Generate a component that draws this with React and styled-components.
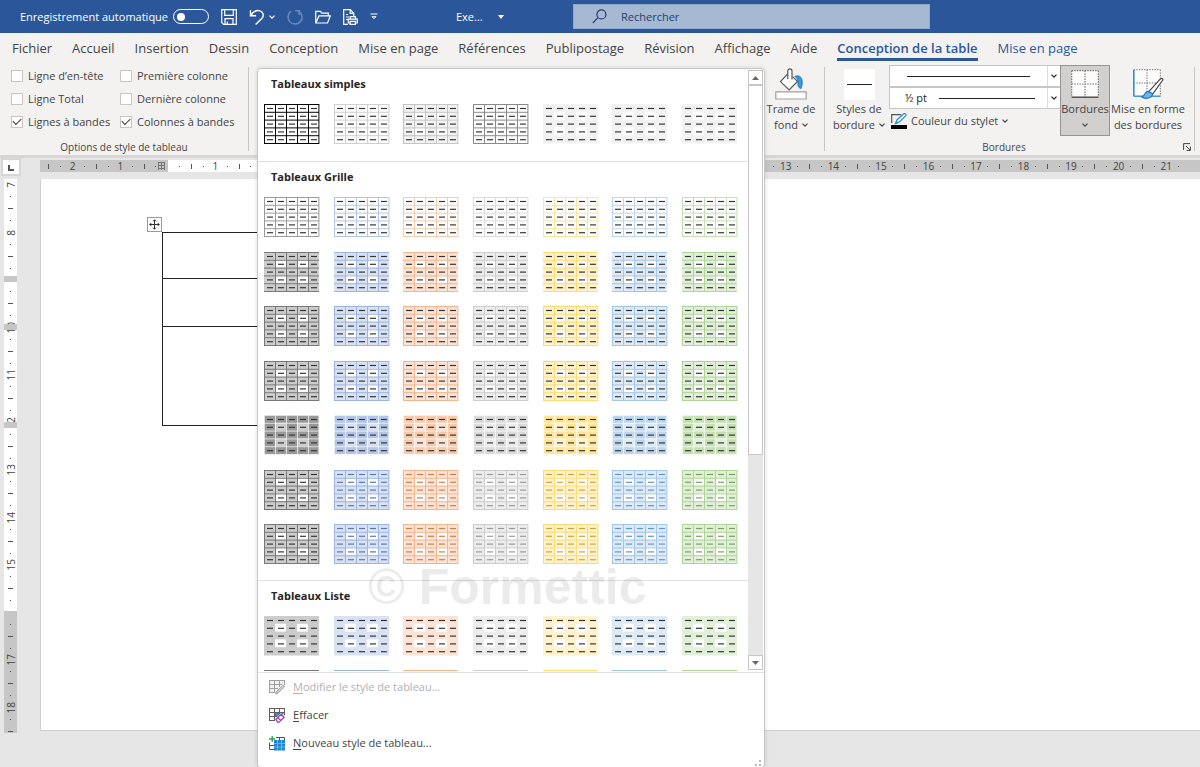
import React from "react";
import styled, { createGlobalStyle } from "styled-components";

const GlobalStyle = createGlobalStyle`
  * { box-sizing: border-box; }
  body {
    margin: 0;
    background: #e6e6e6;
    color: #444;
    font: 11px/16px "Open Sans", "Noto Sans", sans-serif;
  }
  button, input, select {
    font: inherit;
    color: inherit;
    margin: 0;
    padding: 0;
    border: 0;
    background: none;
  }
  svg { display: block; flex: none; }
`;

const Shell = styled.div`
  min-height: 100vh;
  overflow: hidden;
`;

/* ---------- title bar ---------- */

const TitleBar = styled.header`
  display: flex;
  align-items: center;
  height: 33px;
  padding-left: 20px;
  background: #2b579a;
  color: #fff;
`;

const AutoSave = styled.label`
  display: flex;
  align-items: center;
  justify-content: space-between;
  width: 189px;
  margin-right: 12px;
`;

const Toggle = styled.input`
  appearance: none;
  display: flex;
  align-items: center;
  width: 36px;
  height: 15px;
  padding-left: 3px;
  border: 1px solid #fff;
  border-radius: 8px;
  &::before {
    content: "";
    width: 8px;
    height: 8px;
    border-radius: 4px;
    background: #fff;
  }
`;

const QuickTools = styled.div`
  display: flex;
  align-items: center;
  gap: 12px;
  width: 235px;
`;

const ToolPair = styled.div`
  display: flex;
  align-items: center;
  gap: 4px;
`;

const IconButton = styled.button`
  display: flex;
  opacity: ${(p) => (p.disabled ? 0.3 : 1)};
`;

const DocName = styled.button`
  display: flex;
  align-items: center;
  justify-content: space-between;
  width: 48px;
  margin-right: 69px;
`;

const SearchBox = styled.label`
  display: flex;
  align-items: center;
  gap: 14px;
  width: 357px;
  height: 25px;
  padding-left: 18px;
  border: 1px solid #8ea9cf;
  background: #a5b9d3;
  color: #1e3f75;
`;

const SearchInput = styled.input`
  flex: 1;
  min-width: 0;
  outline: 0;
  &::placeholder { color: #1e3f75; opacity: 1; }
`;

/* ---------- ribbon ---------- */

const Tabs = styled.nav`
  display: flex;
  gap: 20px;
  height: 32px;
  padding-left: 12px;
  background: #f3f2f1;
  font-size: 13px;
  white-space: nowrap;
`;

const Tab = styled.button`
  height: 28px;
  padding-top: 4px;
  border-bottom: 3px solid ${(p) => (p.$active ? "#2b579a" : "transparent")};
  color: ${(p) => (p.$context || p.$active ? "#2b579a" : "#444")};
  font-weight: ${(p) => (p.$active ? 600 : 400)};
`;

const Ribbon = styled.div`
  position: relative;
  display: flex;
  height: 90px;
  background: #f3f2f1;
`;

const Group = styled.section`
  display: flex;
  flex-direction: column;
  justify-content: space-between;
  width: ${(p) => p.$width}px;
  margin: 2px 0 4px;
  border-right: 1px solid #c8c6c4;
`;

const GroupCaption = styled.div`
  display: flex;
  align-items: center;
  justify-content: center;
  height: 14px;
  margin-bottom: -3px;
  font-size: 10px;
  line-height: 14px;
`;

const CaptionText = styled.span`
  flex: 1;
  text-align: center;
`;

const Options = styled.div`
  display: grid;
  grid-template-columns: 109px 1fr;
  grid-auto-rows: 23px;
  margin: -3px 0 0 11px;
`;

const Option = styled.label`
  display: flex;
  align-items: center;
  gap: 5px;
  white-space: nowrap;
`;

const CheckBox = styled.input`
  appearance: none;
  display: flex;
  align-items: center;
  justify-content: center;
  width: 12px;
  height: 12px;
  border: 1px solid #c8c6c4;
  background: #fff;
  &:checked::before {
    content: "";
    width: 7px;
    height: 4px;
    margin-top: -2px;
    border: solid #333;
    border-width: 0 0 1px 1px;
    transform: rotate(-45deg);
  }
`;

const Tools = styled.div`
  display: flex;
  align-items: flex-start;
  padding-left: ${(p) => (p.$inset ? 4 : 0)}px;
`;

const BigButton = styled.button`
  display: flex;
  flex-direction: column;
  align-items: center;
  width: ${(p) => p.$width}px;
  height: 71px;
  margin-top: -2px;
  padding-top: 1px;
  border: 1px solid ${(p) => (p.$open ? "#979593" : "transparent")};
  background: ${(p) => (p.$open ? "#d2d0ce" : "transparent")};
  white-space: nowrap;
`;

const BigIcon = styled.span`
  display: flex;
  align-items: center;
  justify-content: center;
  width: 34px;
  height: 34px;
`;

const BigLine = styled.span`
  display: flex;
  align-items: center;
  justify-content: center;
  gap: 4px;
  height: 16px;
`;

const Preview = styled.span`
  display: flex;
  align-items: center;
  width: 31px;
  height: 31px;
  padding: 0 3px;
  background: #fff;
`;

const PenColumn = styled.div`
  display: flex;
  flex-direction: column;
  width: 171px;
  margin-top: -2px;
`;

const PenSelect = styled.button`
  display: flex;
  align-items: center;
  height: 22px;
  border: 1px solid #c8c6c4;
  border-right: 0;
  background: #fff;
  color: #222;
`;

const PenValue = styled.span`
  display: flex;
  align-items: center;
  flex: 1;
  gap: 12px;
  height: 20px;
  padding: 0 ${(p) => (p.$wide ? 17 : 12)}px 0 ${(p) => (p.$wide ? 17 : 15)}px;
  border-right: 1px solid #dddbd9;
`;

const Stroke = styled.span`
  flex: 1;
  height: 1px;
  background: #222;
`;

const PenArrow = styled.span`
  display: flex;
  justify-content: center;
  width: 12px;
`;

const PenColor = styled.button`
  display: flex;
  align-items: center;
  gap: 4px;
  height: 24px;
  padding-left: 2px;
`;

const Launcher = styled.button`
  display: flex;
  padding-right: 3px;
`;

/* ---------- rulers and page ---------- */

const RulerRow = styled.div`
  display: flex;
  align-items: flex-start;
  height: 24px;
  border-top: 3px solid #d6d6d6;
`;

const TabCorner = styled.button`
  display: flex;
  align-items: flex-end;
  justify-content: center;
  width: 20px;
  height: 18px;
  margin: 0 19px 0 1px;
  padding-bottom: 3px;
  border: 2px solid #d6d6d6;
  background: #fff;
`;

const HRuler = styled.div`
  position: relative;
  flex: 1;
  min-width: 0;
  height: 12px;
  margin-top: 2px;
  padding-left: 3px;
  overflow: hidden;
  font-size: 10px;
  background: linear-gradient(90deg, #c6c6c6 128px, #fff 128px, #fff 640px, #c6c6c6 640px);
`;

const HScale = styled.div`
  display: grid;
  grid-template-columns: repeat(96, minmax(0, 1fr));
  width: 1141px;
`;

const VScale = styled.div`
  display: grid;
  grid-template-rows: repeat(48, minmax(0, 1fr));
  height: 570px;
`;

const Mark = styled.span`
  display: flex;
  align-items: center;
  justify-content: center;
  min-width: 0;
  min-height: 0;
  height: ${(p) => (p.$vertical ? "auto" : "12px")};
  line-height: 12px;
`;

const Tick = styled.i`
  width: ${(p) => (p.$w)}px;
  height: ${(p) => (p.$h)}px;
  flex: none;
  background: #555;
`;

const Upright = styled.span`
  writing-mode: vertical-rl;
  transform: rotate(180deg);
`;

const MarginMark = styled.svg`
  position: absolute;
  left: 118px;
  top: 2px;
`;

const Workspace = styled.main`
  display: flex;
  align-items: flex-start;
`;

const VRuler = styled.div`
  position: relative;
  width: 13px;
  height: 554px;
  margin: 0 23px 0 4px;
  overflow: hidden;
  font-size: 10px;
  background: linear-gradient(#fff 432px, #c6c6c6 432px);
`;

const RowMarker = styled.i`
  position: absolute;
  left: 0;
  top: ${(p) => p.$top}px;
  width: 13px;
  height: 6px;
  background: #c6c6c6;
`;

const Page = styled.article`
  position: relative;
  flex: 1;
  height: 552px;
  padding: 53px 0 0 121px;
  border: solid #cfcfcf;
  border-width: 0 0 1px 1px;
  background: #fff;
`;

const MoveHandle = styled.button`
  position: absolute;
  left: 106px;
  top: 38px;
  display: flex;
  align-items: center;
  justify-content: center;
  width: 15px;
  height: 15px;
  border: 1px solid #999;
  background: #fff;
`;

const DocTable = styled.table`
  width: 560px;
  border-collapse: collapse;
  td { border: 1px solid #222; padding: 0; }
`;

const DocRow = styled.tr`
  height: ${(p) => p.$height}px;
`;

/* ---------- style gallery ---------- */

const Gallery = styled.div`
  position: relative;
  width: 517px;
`;

const Menu = styled.div`
  position: absolute;
  z-index: 2;
  left: 8px;
  top: 3px;
  width: 508px;
  border: 1px solid #c8c8c8;
  border-radius: 4px;
  background: #fff;
  box-shadow: 0 0 4px rgba(0, 0, 0, 0.14);
`;

const ListArea = styled.div`
  display: flex;
  height: 604px;
  border-bottom: 1px solid #e1e1e1;
`;

const Sections = styled.div`
  flex: 1;
  height: 602px;
  overflow: hidden;
`;

const Section = styled.section`
  padding: 0 10px 16px 6px;
  border-bottom: 1px solid #e1e1e1;
`;

const SectionTitle = styled.h2`
  height: 35px;
  margin: 0;
  padding: 7px 0 0 7px;
  color: #262626;
  font-size: 11px;
  line-height: 16px;
  font-weight: 700;
`;

const ThumbGrid = styled.div`
  display: grid;
  grid-template-columns: repeat(7, 56px);
  justify-content: space-between;
  align-content: space-between;
  height: ${(p) => p.$height}px;
`;

const Thumb = styled.button`
  display: block;
  width: 56px;
  height: 40px;
`;

const ScrollBar = styled.div`
  display: flex;
  flex-direction: column;
  width: 15px;
  height: 600px;
  margin: 1px 1px 0 0;
  background: #e6e6e6;
`;

const ScrollButton = styled.button`
  display: flex;
  align-items: center;
  justify-content: center;
  height: 15px;
  border: 1px solid #c6c6c6;
  background: #fff;
`;

const ScrollThumb = styled.div`
  height: 370px;
  margin-bottom: auto;
  border: 1px solid #c6c6c6;
  background: #fff;
`;

const Commands = styled.div`
  position: relative;
  display: flex;
  flex-direction: column;
  height: 94px;
`;

const Command = styled.button`
  display: flex;
  align-items: center;
  gap: 8px;
  height: 28px;
  padding-left: 11px;
  color: ${(p) => (p.disabled ? "#b1b1b1" : "#444")};
  u { text-underline-offset: 2px; }
`;

const Grip = styled.svg`
  position: absolute;
  right: 3px;
  bottom: 1px;
`;

const Watermark = styled.div`
  position: absolute;
  left: 110px;
  top: 490px;
  color: rgba(0, 0, 0, 0.08);
  font: 700 50px/56px "Liberation Sans", sans-serif;
  pointer-events: none;
  white-space: nowrap;
`;

/* ---------- drawings ---------- */

const Chevron = ({ size = 6, color = "currentColor" }) => (
  <svg width={size} height={size} viewBox="0 0 6 6" fill="none" stroke={color} strokeWidth="1.2">
    <path d="M.5 1.7 3 4.2 5.5 1.7" />
  </svg>
);

const Line = ({ w = 16, h = w, children, ...rest }) => (
  <svg width={w} height={h} viewBox={`0 0 ${w} ${h}`} fill="none" stroke="currentColor" strokeWidth="1.2" {...rest}>
    {children}
  </svg>
);

const SaveIcon = () => (
  <Line w={16}>
    <path d="M.7.7h14.6v14.6H2.6L.7 13.4zM3.7.7v5.6h8.6V.7M4 15.3v-5.6h8v5.6M6.3 15v-2.6" />
  </Line>
);
const UndoIcon = () => (
  <Line w={16} strokeWidth="1.4">
    <path d="M1.5 1.2v5.6h5.6M1.8 6.6C4.5 2 8 .8 11 1.8c3.4 1.2 4.3 4.8 2 7.4L6.6 15.4" />
  </Line>
);
const RedoIcon = () => (
  <Line w={16} strokeWidth="1.5">
    <path d="M4.3 2.2A7 7 0 1 0 12 2.3M12.2 6V1.8h-4" />
  </Line>
);
const OpenIcon = () => (
  <Line w={16}>
    <path d="M.7 14V2.3h4.7l1.4 1.8h6.5v2.8M.9 14l3-7.1h11.4L12.5 14z" />
  </Line>
);
const PrintIcon = () => (
  <Line w={15} h={16}>
    <path d="M5 15.3H.7V.7h6.6l3.5 3.5v3M7.2.8v3.6h3.5M3 5.5h2M3 8h3M3 10.5h2M7.2 10.2V7.6h5.2v2.6M7 14H5.3v-3.8h9V14h-1.5M7.2 12.4h5.2v2.9H7.2z" />
  </Line>
);
const CustomizeIcon = () => (
  <Line w={8} h={8}>
    <path d="M.5 1h7M2 3.7 4 5.7l2-2z" strokeWidth="1" />
  </Line>
);
const SearchIcon = () => (
  <Line w={15}>
    <circle cx="9.4" cy="5.4" r="4.5" />
    <path d="M6 8.6.8 14" />
  </Line>
);

const BucketIcon = () => (
  <Line w={32} h={32} stroke="#555">
    <path d="M12.8 5.8 5.5 13.6l8.6 8.3 8.4-8.5-5-4.8" fill="#fff" />
    <path d="M12.8 11V3c0-2.8 4.2-2.8 4.2 0v8.5" fill="#fff" />
    <path d="M19.8 8.4c3.4-1.4 6.3-.2 7.2 3.4.6 2.6.2 5.6-.9 8.7-2.5-.6-3.4-2-3.2-5 .1-3.4-.6-5.8-3.1-7.1z" fill="#3a96dd" stroke="#1f6fb5" strokeWidth=".8" />
    <path d="M.8 23.8h30.4v7.2H.8z" fill="#fff" stroke="#a19f9d" />
  </Line>
);

const GridDots = ({ left = "#444", bottom = "#444", solidLeft }) => (
  <>
    <path d="M.7.7h26.6v26.6H.7z" fill="#fbfbfb" stroke="none" />
    <path d="M.7.7h26.6M27.3.7v26.6M.7 14h26.6M14 .7v26.6" stroke="#777" strokeDasharray="1.4 1.2" />
    <path d="M.7.7v26.6" stroke={left} strokeWidth={solidLeft ? 1.8 : 1.2} strokeDasharray={solidLeft ? "none" : "1.4 1.2"} />
    <path d="M.7 27.2h26.6" stroke={bottom} strokeWidth="1.4" />
  </>
);

const BordersIcon = () => (
  <Line w={28} h={28}>
    <GridDots left="#777" />
  </Line>
);
const PainterIcon = () => (
  <svg width="31" height="30" viewBox="0 0 31 30" fill="none">
    <GridDots left="#2f8fd8" bottom="#2f8fd8" solidLeft />
    <path d="M29.8 11 19.4 25.4l-3.6-2.8L27.4 9.9c1.3-1 3 .1 2.4 1.1z" fill="#fff" stroke="#444" strokeWidth="1.2" />
    <path d="M15.6 22.4c-4.4-.2-3 4.3-6.8 5.6 4 2.6 10.4 1.2 10.8-3.2z" fill="#6cb4ea" stroke="#1f6fb5" strokeWidth="1.2" />
  </svg>
);
const PenColorIcon = () => (
  <svg width="16" height="16" viewBox="0 0 16 16" fill="none">
    <path d="M.7 10V1.7h9.6" stroke="#555" strokeWidth="1.2" />
    <path d="M4.6 10.6 6 6.9 12.8.8c1.3-.8 2.7.6 2 1.8L8.3 9z" fill="#fff" stroke="#2f8fd8" strokeWidth="1.3" />
    <path d="m4 11.2 1.3-3.4 2.2 2z" fill="#2f8fd8" />
    <path d="M0 12h16v4H0z" fill="#000" />
  </svg>
);
const LauncherIcon = () => (
  <Line w={8}>
    <path d="M.6 7V.6H7M2.8 2.8 7 7M7.4 3.6v3.8H3.6" strokeWidth="1" />
  </Line>
);

const MoveIcon = () => (
  <Line w={11} stroke="#333" strokeWidth="1">
    <path d="M5.5.8v9.4M.8 5.5h9.4M4 2.3 5.5.8 7 2.3M4 8.7l1.5 1.5L7 8.7M2.3 4 .8 5.5 2.3 7M8.7 4l1.5 1.5L8.7 7" />
  </Line>
);

const TableOutline = ({ stroke }) => (
  <path d="M0 .5h16M.5 0v13M0 4.5h16M0 8.5h10M5.5 0v13M10.5 0v7M15.5 0v7M0 12.5h6" stroke={stroke} strokeWidth="1" />
);
const EditStyleIcon = () => (
  <Line w={16} h={15}>
    <path d="M0 0h16v5l-8 8H0z" fill="#f0f0f0" stroke="none" />
    <TableOutline stroke="#a0a0a0" />
    <path d="m6.4 14.4.9-3.2 6.8-6.4 1.9 1.9-6.6 6.6z" fill="#fff" stroke="#fff" strokeWidth="1.6" />
    <path d="m6.6 14 .9-2.6 6.6-6.2 1.5 1.5-6.5 6.3z" fill="#d0d0d0" stroke="#999" strokeWidth=".9" />
  </Line>
);
const ClearIcon = () => (
  <Line w={16} h={15}>
    <path d="M0 0h16v6l-8 7H0z" fill="#fff" stroke="none" />
    <path d="M5.5 4.5h9v4h-9z" fill="#2b8bd8" stroke="none" />
    <TableOutline stroke="#5f5f5f" />
    <path d="M6.6 11.2 11.9 6l3.4 3.2-5.1 5.1H8.4z" fill="#fff" stroke="#fff" strokeWidth="1.6" />
    <path d="M6.9 11.3 12 6.4l3.1 2.9-4.9 4.9H8.6zM8.8 9.6l3 2.9" fill="#fff" stroke="#a33bb0" strokeWidth="1.3" />
  </Line>
);
const NewStyleIcon = () => (
  <Line w={16} h={15}>
    <path d="M7 1.5h8.5V4M10.5 1.5V4M.5 6.5v7H5M.5 9.5H5" stroke="#555" strokeWidth="1" />
    <path d="M5 4h11v10.5H5z" fill="#1f86d6" stroke="none" />
    <path d="M5 7.5h11M5 11h11M8.5 4v10.5M12.5 4v10.5" stroke="#7dbdee" strokeWidth=".8" />
    <path d="M3.2 0v6M0 3h6.2" stroke="#2f9e44" strokeWidth="1.3" />
  </Line>
);

/* ---------- table style thumbnails ---------- */

const CELLS = [0, 1, 2, 3, 4];

// Draws a five by five sample table: background, lighter body cells, rules and text dashes.
function TableSample({ fill = "none", cell, line, dash = "#333", outer = true }) {
  return (
    <svg width="56" height="40" viewBox="0 0 56 41" preserveAspectRatio="none">
      <rect width="55" height="40.5" fill={fill} />
      {cell &&
        [1, 3].map((r) =>
          [1, 3].map((c) => <rect key={`${r}${c}`} x={c * 11} y={r * 8} width="11" height="8" fill={cell} />)
        )}
      {line && (
        <path
          d={
            "M0 .5h55M0 8.5h55M0 16.5h55M0 24.5h55M0 32.5h55M0 40.5h55" +
            "M11.5 0v41M22.5 0v41M33.5 0v41M44.5 0v41" +
            (outer ? "M.5 0v41M54.9 0v41" : "")
          }
          stroke={line}
          fill="none"
        />
      )}
      {CELLS.map((r) => CELLS.map((c) => <rect key={`${r}${c}`} x={3 + c * 11} y={4 + r * 8} width="6" height="1.2" fill={dash} />))}
    </svg>
  );
}

function TopRule({ color }) {
  return (
    <svg width="56" height="40" viewBox="0 0 56 40">
      <rect width="55" height="2" fill={color} />
    </svg>
  );
}

const TONES = [
  { name: "Gris foncé", light: "#cccccc", mid: "#999999", line: "#777777", dash: "#333333" },
  { name: "Bleu", light: "#d9e2f3", mid: "#b4c6e7", line: "#9cb4e0", dash: "#5a77b4" },
  { name: "Orange", light: "#fbe4d5", mid: "#f7caac", line: "#f4b58c", dash: "#d07c45" },
  { name: "Gris", light: "#ededed", mid: "#dbdbdb", line: "#cccccc", dash: "#999999" },
  { name: "Or", light: "#fff2cc", mid: "#ffe599", line: "#ffdb70", dash: "#cda437" },
  { name: "Bleu clair", light: "#deeaf6", mid: "#bdd6ee", line: "#a3c6e8", dash: "#5d95cc" },
  { name: "Vert", light: "#e2efd9", mid: "#c5e0b3", line: "#afd497", dash: "#7ba05f" },
];

const SIMPLE = [
  { line: "#000000" },
  { line: "#cfcfcf" },
  { line: "#c4c4c4", fill: "#f2f2f2", cell: "#fff" },
  { line: "#888888" },
  { fill: "#f2f2f2", cell: "#fff" },
  { fill: "#f2f2f2", cell: "#fff" },
  { fill: "#f2f2f2", cell: "#fff" },
];

const GRID_ROWS = [
  (t) => ({ line: t.mid }),
  (t) => ({ fill: t.light, cell: "#fff", line: t.line, outer: false }),
  (t) => ({ fill: t.light, cell: "#fff", line: t.line }),
  (t) => ({ fill: t.light, cell: "#fff", line: t.line }),
  (t) => ({ fill: t.mid, cell: t.light, line: "#ffffffb0" }),
  (t) => ({ fill: t.light, cell: "#fff", line: t.line, dash: t.dash }),
  (t) => ({ fill: t.light, cell: "#fff", line: t.line, dash: t.dash }),
];

function StyleMenu() {
  return (
    <Menu role="menu">
      <ListArea>
        <Sections>
          <Section>
            <SectionTitle>Tableaux simples</SectionTitle>
            <ThumbGrid $height={41}>
              {SIMPLE.map((s, i) => (
                <Thumb key={i} aria-label={`Tableau simple ${i + 1}`}>
                  <TableSample {...s} />
                </Thumb>
              ))}
            </ThumbGrid>
          </Section>
          <Section>
            <SectionTitle>Tableaux Grille</SectionTitle>
            <ThumbGrid $height={367}>
              {GRID_ROWS.map((make, r) =>
                TONES.map((t) => (
                  <Thumb key={r + t.name} aria-label={`Grille ${r + 1} ${t.name}`}>
                    <TableSample {...make(t)} />
                  </Thumb>
                ))
              )}
            </ThumbGrid>
          </Section>
          <Section>
            <SectionTitle>Tableaux Liste</SectionTitle>
            <ThumbGrid $height={94}>
              {TONES.map((t) => (
                <Thumb key={t.name} aria-label={`Liste 1 ${t.name}`}>
                  <TableSample fill={t.light} cell="#fff" />
                </Thumb>
              ))}
              {TONES.map((t) => (
                <Thumb key={t.name} aria-label={`Liste 2 ${t.name}`}>
                  <TopRule color={t.line} />
                </Thumb>
              ))}
            </ThumbGrid>
          </Section>
        </Sections>
        <ScrollBar>
          <ScrollButton aria-label="Défiler vers le haut">
            <svg width="7" height="4" viewBox="0 0 7 4"><path d="M3.5 0 7 4H0z" fill="#666" /></svg>
          </ScrollButton>
          <ScrollThumb />
          <ScrollButton aria-label="Défiler vers le bas">
            <svg width="7" height="4" viewBox="0 0 7 4"><path d="M3.5 4 7 0H0z" fill="#666" /></svg>
          </ScrollButton>
        </ScrollBar>
      </ListArea>
      <Commands>
        <Command disabled><EditStyleIcon /><span><u>M</u>odifier le style de tableau...</span></Command>
        <Command><ClearIcon /><span><u>E</u>ffacer</span></Command>
        <Command><NewStyleIcon /><span><u>N</u>ouveau style de tableau...</span></Command>
        <Grip width="6" height="6" viewBox="0 0 6 6">
          <path d="M4 0h2v2H4zM0 4h2v2H0zM4 4h2v2H4z" fill="#b8b8b8" />
        </Grip>
      </Commands>
      <Watermark>© Formettic</Watermark>
    </Menu>
  );
}

/* ---------- rulers ---------- */

// Numbers 2 to 12 lie under the open gallery, so only the visible ones are listed.
const H_LABELS = ["2", "1", "", "1", ...Array(11).fill(""), ...Array.from({ length: 9 }, (_, i) => String(i + 13))];
const V_LABELS = ["7", "8", "", "10", "11", "12", "13", "14", "15", "", "17", "18"];

function HorizontalRuler() {
  return (
    <HRuler>
      <HScale>
        {H_LABELS.map((n, i) => (
          <React.Fragment key={i}>
            <Mark><Tick $w={1} $h={5} /></Mark>
            <Mark><Tick $w={1} $h={1} /></Mark>
            <Mark>{n}</Mark>
            <Mark><Tick $w={1} $h={1} /></Mark>
          </React.Fragment>
        ))}
      </HScale>
      <MarginMark width="7" height="8" viewBox="0 0 7 8" stroke="#777" strokeWidth="1" shapeRendering="crispEdges">
        <path d="M.5 0v8M3.5 0v8M6.5 0v8M0 .5h7M0 3.5h7M0 6.5h7" />
      </MarginMark>
    </HRuler>
  );
}

function VerticalRuler() {
  return (
    <VRuler>
      <VScale>
        {V_LABELS.map((n, i) => (
          <React.Fragment key={i}>
            <Mark $vertical><Upright>{n}</Upright></Mark>
            <Mark $vertical><Tick $w={1} $h={1} /></Mark>
            <Mark $vertical><Tick $w={5} $h={1} /></Mark>
            <Mark $vertical><Tick $w={1} $h={1} /></Mark>
          </React.Fragment>
        ))}
      </VScale>
      <RowMarker $top={97} />
      <RowMarker $top={145} />
      <RowMarker $top={243} />
    </VRuler>
  );
}

const TABS = ["Fichier", "Accueil", "Insertion", "Dessin", "Conception", "Mise en page", "Références", "Publipostage", "Révision", "Affichage", "Aide"];

const OPTIONS = [
  ["Ligne d’en-tête", false],
  ["Première colonne", false],
  ["Ligne Total", false],
  ["Dernière colonne", false],
  ["Lignes à bandes", true],
  ["Colonnes à bandes", true],
];

export default function App() {
  return (
    <Shell>
      <GlobalStyle />
      <TitleBar>
        <AutoSave>
          Enregistrement automatique
          <Toggle type="checkbox" role="switch" />
        </AutoSave>
        <QuickTools>
          <IconButton aria-label="Enregistrer"><SaveIcon /></IconButton>
          <ToolPair>
            <IconButton aria-label="Annuler"><UndoIcon /></IconButton>
            <IconButton aria-label="Liste des annulations"><Chevron /></IconButton>
          </ToolPair>
          <IconButton aria-label="Rétablir" disabled><RedoIcon /></IconButton>
          <IconButton aria-label="Ouvrir"><OpenIcon /></IconButton>
          <IconButton aria-label="Aperçu et impression"><PrintIcon /></IconButton>
          <IconButton aria-label="Personnaliser"><CustomizeIcon /></IconButton>
        </QuickTools>
        <DocName>
          Exe...
          <svg width="6" height="4" viewBox="0 0 6 4"><path d="M0 0h6L3 4z" fill="#fff" /></svg>
        </DocName>
        <SearchBox>
          <SearchIcon />
          <SearchInput placeholder="Rechercher" aria-label="Rechercher" />
        </SearchBox>
      </TitleBar>

      <Tabs>
        {TABS.map((t) => <Tab key={t}>{t}</Tab>)}
        <Tab $active>Conception de la table</Tab>
        <Tab $context>Mise en page</Tab>
      </Tabs>

      <Ribbon>
        <Group $width={249}>
          <Options>
            {OPTIONS.map(([label, on]) => (
              <Option key={label}>
                <CheckBox type="checkbox" defaultChecked={on} />
                {label}
              </Option>
            ))}
          </Options>
          <GroupCaption><CaptionText>Options de style de tableau</CaptionText></GroupCaption>
        </Group>

        <Gallery><StyleMenu /></Gallery>

        <Group $width={59}>
          <Tools>
            <BigButton $width={50}>
              <BigIcon><BucketIcon /></BigIcon>
              <BigLine>Trame de</BigLine>
              <BigLine>fond <Chevron /></BigLine>
            </BigButton>
          </Tools>
        </Group>

        <Group $width={370}>
          <Tools $inset>
            <BigButton $width={60}>
              <BigIcon><Preview><Stroke /></Preview></BigIcon>
              <BigLine>Styles de</BigLine>
              <BigLine>bordure <Chevron /></BigLine>
            </BigButton>
            <PenColumn>
              <PenSelect aria-label="Style du trait">
                <PenValue $wide><Stroke /></PenValue>
                <PenArrow><Chevron /></PenArrow>
              </PenSelect>
              <PenSelect aria-label="Épaisseur du trait">
                <PenValue>½ pt <Stroke /></PenValue>
                <PenArrow><Chevron /></PenArrow>
              </PenSelect>
              <PenColor><PenColorIcon />Couleur du stylet <Chevron /></PenColor>
            </PenColumn>
            <BigButton $width={50} $open>
              <BigIcon><BordersIcon /></BigIcon>
              <BigLine>Bordures</BigLine>
              <BigLine><Chevron /></BigLine>
            </BigButton>
            <BigButton $width={76}>
              <BigIcon><PainterIcon /></BigIcon>
              <BigLine>Mise en forme</BigLine>
              <BigLine>des bordures</BigLine>
            </BigButton>
          </Tools>
          <GroupCaption>
            <CaptionText>Bordures</CaptionText>
            <Launcher aria-label="Options de bordure"><LauncherIcon /></Launcher>
          </GroupCaption>
        </Group>
      </Ribbon>

      <RulerRow>
        <TabCorner aria-label="Taquet de tabulation">
          <svg width="6" height="6" viewBox="0 0 6 6"><path d="M1 0v5h5" fill="none" stroke="#555" strokeWidth="2" /></svg>
        </TabCorner>
        <HorizontalRuler />
      </RulerRow>

      <Workspace>
        <VerticalRuler />
        <Page>
          <MoveHandle aria-label="Déplacer le tableau"><MoveIcon /></MoveHandle>
          <DocTable>
            <tbody>
              <DocRow $height={46}><td /></DocRow>
              <DocRow $height={48}><td /></DocRow>
              <DocRow $height={99}><td /></DocRow>
            </tbody>
          </DocTable>
        </Page>
      </Workspace>
    </Shell>
  );
}
